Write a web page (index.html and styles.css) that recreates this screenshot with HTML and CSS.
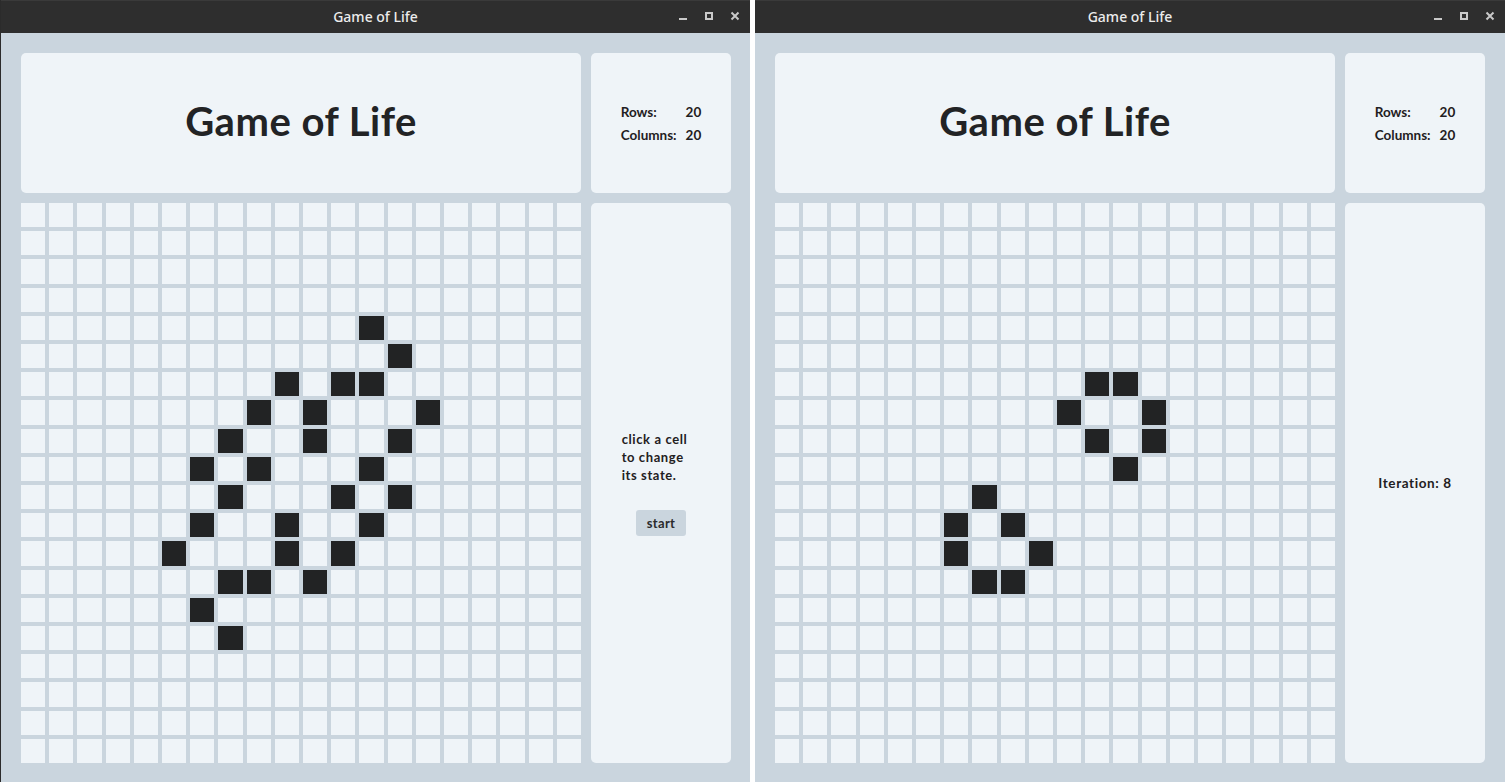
FILE: index.html
```html
<!DOCTYPE html>
<html lang="en">
<head>
<meta charset="utf-8">
<title>Game of Life</title>
<link rel="stylesheet" href="styles.css">
</head>
<body>
<div class="desktop">
  <section class="window window-left">
    <header class="titlebar">
      <span class="title">Game of Life</span>
      <div class="controls">
        <svg width="10" height="10" viewBox="0 0 10 10"><rect x="1" y="7" width="8" height="2" fill="#c9c9c9"/></svg>
        <svg width="10" height="10" viewBox="0 0 10 10"><rect x="2" y="2" width="6" height="6" fill="none" stroke="#c9c9c9" stroke-width="2"/></svg>
        <svg width="10" height="10" viewBox="0 0 10 10"><path d="M1.5 1.5 L8.5 8.5 M8.5 1.5 L1.5 8.5" stroke="#c9c9c9" stroke-width="2"/></svg>
      </div>
    </header>
    <main class="content">
      <div class="panel heading"><h1>Game of Life</h1></div>
      <div class="panel stats">
        <dl class="stat-list">
          <dt>Rows:</dt><dd>20</dd>
          <dt>Columns:</dt><dd>20</dd>
        </dl>
      </div>
      <div class="board" data-live="4,12;5,13;6,9;6,11;6,12;7,8;7,10;7,14;8,7;8,10;8,13;9,6;9,8;9,12;10,7;10,11;10,13;11,6;11,9;11,12;12,5;12,9;12,11;13,7;13,8;13,10;14,6;15,7"></div>
      <div class="panel side">
        <div class="side-inner">
          <p class="hint">click a cell<br>to change<br>its state.</p>
          <button class="start">start</button>
        </div>
      </div>
    </main>
  </section>
  <section class="window window-right">
    <header class="titlebar">
      <span class="title">Game of Life</span>
      <div class="controls">
        <svg width="10" height="10" viewBox="0 0 10 10"><rect x="1" y="7" width="8" height="2" fill="#c9c9c9"/></svg>
        <svg width="10" height="10" viewBox="0 0 10 10"><rect x="2" y="2" width="6" height="6" fill="none" stroke="#c9c9c9" stroke-width="2"/></svg>
        <svg width="10" height="10" viewBox="0 0 10 10"><path d="M1.5 1.5 L8.5 8.5 M8.5 1.5 L1.5 8.5" stroke="#c9c9c9" stroke-width="2"/></svg>
      </div>
    </header>
    <main class="content">
      <div class="panel heading"><h1>Game of Life</h1></div>
      <div class="panel stats">
        <dl class="stat-list">
          <dt>Rows:</dt><dd>20</dd>
          <dt>Columns:</dt><dd>20</dd>
        </dl>
      </div>
      <div class="board" data-live="6,11;6,12;7,10;7,13;8,11;8,13;9,12;10,7;11,6;11,8;12,6;12,9;13,7;13,8"></div>
      <div class="panel side">
        <p class="iteration">Iteration: 8</p>
      </div>
    </main>
  </section>
</div>
<script src="script.js"></script>
</body>
</html>
```

FILE: styles.css
```css
* { box-sizing: border-box; }
html, body { margin: 0; padding: 0; }
body {
  background: #ffffff;
  font-family: "Lato", "Noto Sans", sans-serif;
  color: #1f2022;
}
.desktop {
  display: flex;
  gap: 5px;
  width: 1505px;
  height: 782px;
  overflow: hidden;
}
.window {
  width: 750px;
  height: 782px;
  display: flex;
  flex-direction: column;
  background: #cad5de;
}
.window-left { border-left: 1px solid #2b2b2b; }
.titlebar {
  position: relative;
  height: 33px;
  background: #2e2e2e;
  box-shadow: inset 0 1px 0 #3a3a3a;
  display: flex;
  align-items: center;
  justify-content: center;
}
.title {
  font-family: "Noto Sans", "Open Sans", sans-serif;
  font-size: 14px;
  color: #ececec;
  font-weight: 500;
}
.controls {
  position: absolute;
  right: 10px;
  top: 11px;
  display: flex;
  gap: 16px;
}
.controls svg { display: block; }
.content {
  display: grid;
  grid-template-columns: 560px 140px;
  grid-template-rows: 140px 560px;
  gap: 10px;
  padding: 20px 20px 0 20px;
}
.panel {
  background: #eff4f8;
  border-radius: 5px;
}
.heading {
  display: flex;
  align-items: center;
  justify-content: center;
  padding-bottom: 4px;
}
.heading h1 {
  margin: 0;
  font-size: 40px;
  font-weight: 700;
  letter-spacing: 0.5px;
  color: #222325;
}
.stats {
  display: flex;
  align-items: center;
  justify-content: center;
}
.stat-list {
  margin: 0;
  display: grid;
  grid-template-columns: auto auto;
  column-gap: 9px;
  row-gap: 6px;
  font-size: 13.5px;
  font-weight: 700;
  line-height: 17px;
  padding-top: 2px;
}
.stat-list dt, .stat-list dd { margin: 0; }
.board {
  display: grid;
  grid-template-columns: repeat(20, 1fr);
  grid-template-rows: repeat(20, 1fr);
  gap: 4px;
}
.cell { background: #eff4f8; }
.cell.alive { background: #222324; }
.side {
  display: flex;
  align-items: center;
  justify-content: center;
}
.side-inner {
  display: flex;
  flex-direction: column;
  align-items: center;
}
.hint {
  margin: 0 0 0 -13px;
  font-size: 13px;
  font-weight: 700;
  line-height: 18px;
  letter-spacing: 0.6px;
  text-align: left;
}
.start {
  margin-top: 26px;
  width: 50px;
  height: 26px;
  border: none;
  border-radius: 3px;
  background: #cad5de;
  font-family: "Lato", "Noto Sans", sans-serif;
  font-size: 13px;
  font-weight: 700;
  letter-spacing: 0.3px;
  color: #2a2b2d;
  padding: 0;
}
.iteration {
  margin: 0;
  font-size: 13.5px;
  font-weight: 700;
  letter-spacing: 0.6px;
}
```

FILE: script.js
```js
document.querySelectorAll('.board').forEach(function (board) {
  var live = {};
  board.getAttribute('data-live').split(';').forEach(function (p) { live[p] = true; });
  for (var r = 0; r < 20; r++) {
    for (var c = 0; c < 20; c++) {
      var d = document.createElement('div');
      d.className = 'cell' + (live[r + ',' + c] ? ' alive' : '');
      board.appendChild(d);
    }
  }
});
```
